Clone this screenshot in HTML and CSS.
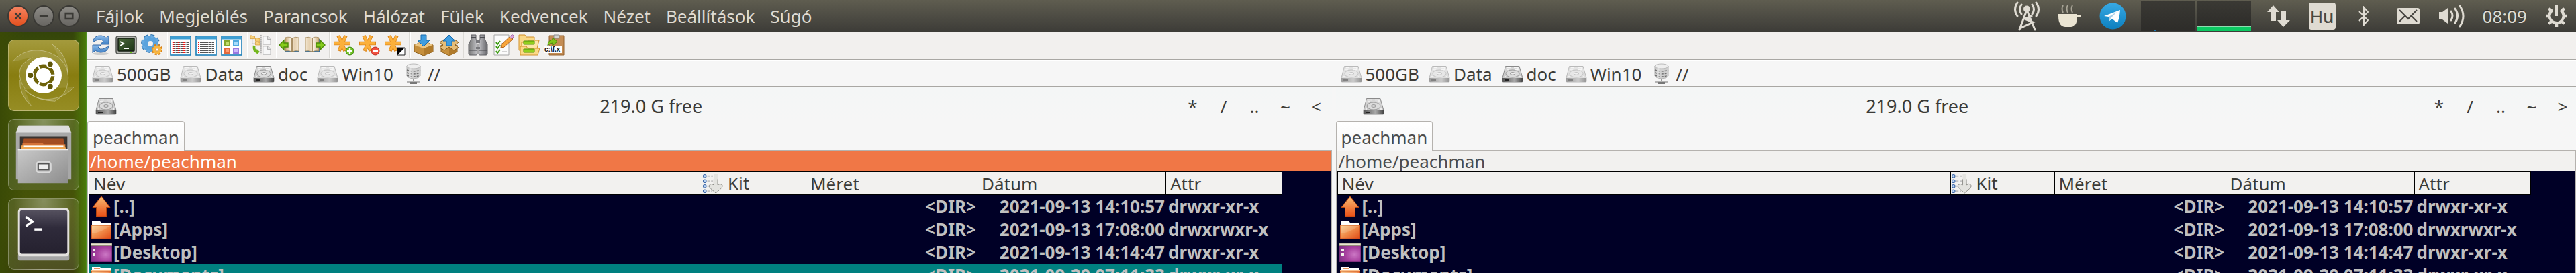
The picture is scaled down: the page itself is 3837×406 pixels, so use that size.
FILE: index.html
```html
<!DOCTYPE html>
<html lang="hu">
<head>
<meta charset="utf-8">
<title>/home/peachman</title>
<link rel="stylesheet" href="styles.css">
</head>
<body>
<svg class="defs" aria-hidden="true">
  <defs>
    <linearGradient id="gOrange" x1="0" y1="0" x2="1" y2="1"><stop offset="0" stop-color="#fbd08c"/><stop offset=".5" stop-color="#f08a48"/><stop offset="1" stop-color="#df4814"/></linearGradient>
    <linearGradient id="gUp" x1="0" y1="0" x2="0" y2="1"><stop offset="0" stop-color="#f8bd74"/><stop offset="1" stop-color="#ea4f16"/></linearGradient>
    <radialGradient id="gPurple" cx=".7" cy=".6" r=".8"><stop offset="0" stop-color="#cb77c4"/><stop offset=".5" stop-color="#a8409f"/><stop offset="1" stop-color="#7c2f84"/></radialGradient>
    <linearGradient id="gDisk" x1="0" y1="0" x2="0" y2="1"><stop offset="0" stop-color="#d8d8d8"/><stop offset="1" stop-color="#c6c6c6"/></linearGradient>
    <linearGradient id="gDiskFront" x1="0" y1="0" x2="1" y2="0"><stop offset="0" stop-color="#555"/><stop offset=".6" stop-color="#aaa"/><stop offset="1" stop-color="#444"/></linearGradient>
    <linearGradient id="gBlue" x1="0" y1="0" x2="0" y2="1"><stop offset="0" stop-color="#8cbcec"/><stop offset="1" stop-color="#3f7fc4"/></linearGradient>
    <linearGradient id="gScreen" x1="0" y1="0" x2="1" y2="1"><stop offset="0" stop-color="#4d6a3d"/><stop offset="1" stop-color="#1c3316"/></linearGradient>
    <linearGradient id="gPaper" x1="0" y1="0" x2="1" y2="0"><stop offset="0" stop-color="#c9a877"/><stop offset=".4" stop-color="#f9f1e2"/><stop offset=".7" stop-color="#e4cfae"/><stop offset="1" stop-color="#f3e7d2"/></linearGradient>
    <linearGradient id="gMetal" x1="0" y1="0" x2="1" y2="0"><stop offset="0" stop-color="#777"/><stop offset=".5" stop-color="#c8c8cc"/><stop offset="1" stop-color="#66666a"/></linearGradient>
    <linearGradient id="gTele" x1="0" y1="0" x2="0" y2="1"><stop offset="0" stop-color="#38a9e4"/><stop offset="1" stop-color="#0c7fbe"/></linearGradient>
    <linearGradient id="gCabinet" x1="0" y1="0" x2="1" y2="1"><stop offset="0" stop-color="#c9c9c9"/><stop offset="1" stop-color="#8d8d8d"/></linearGradient>
    <linearGradient id="gTerm" x1="0" y1="0" x2="0" y2="1"><stop offset="0" stop-color="#55515f"/><stop offset=".4" stop-color="#2f2b3b"/><stop offset="1" stop-color="#25212f"/></linearGradient>
  </defs>
  <symbol id="disk" viewBox="0 0 32 32">
    <path d="M5.500 4.500h20.500l5 17.500v5q0 1-1 1h-28q-1 0-1-1v-5z" fill="url(#gDisk)" stroke="#8a8a8a"/>
    <path d="M1 22h30v5q0 1-1 1h-28q-1 0-1-1z" fill="url(#gDiskFront)"/>
    <path d="M4 25h7" stroke="#222" stroke-width="2"/>
    <ellipse cx="16" cy="15.500" rx="10" ry="5.500" fill="#dcdcdc" stroke="#999"/>
    <ellipse cx="16" cy="15.500" rx="3.500" ry="1.800" fill="#eee" stroke="#888"/>
    <path d="M8 6.500h5M18 6.500h6v3h-5M7 9h4M4 20h2M26 20h2" stroke="#f6f6f6" fill="none" stroke-width="1.500"/>
  </symbol>
  <symbol id="net" viewBox="0 0 32 32">
    <path d="M6 4v14q0 4 10 5q10-1 10-5v-14z" fill="#d0d0d0" stroke="#b2b2b2"/>
    <path d="M6 10q10 4 20 0M6 14q10 4 20 0M6 18q10 4 20 0" stroke="#707070" fill="none" stroke-width="1.500" stroke-dasharray="3 2"/>
    <ellipse cx="16" cy="4.500" rx="10" ry="3.500" fill="#eee" stroke="#bbb"/>
    <path d="M11 7v15" stroke="#f2f2f2" stroke-width="3" opacity=".6"/>
    <path d="M16 23v4" stroke="#999" stroke-width="2"/>
    <path d="M6 28h20" stroke="#b4b4b4" stroke-width="3"/><path d="M11 29.500h10" stroke="#777" stroke-width="3"/>
  </symbol>
  <symbol id="up" viewBox="0 0 32 32">
    <path d="M16 1L29 17.500h-5.500v13.500h-15v-13.500H3z" fill="url(#gUp)" stroke="#b8460f"/>
  </symbol>
  <symbol id="folder" viewBox="0 0 32 32">
    <path d="M2 10V4h12l2 2h14v6z" fill="#fff"/><path d="M5 6.500h9" stroke="#e9955f"/>
    <path d="M1 9.500h30v21H1z" fill="url(#gOrange)"/><path d="M1.500 10h29v20h-29z" fill="none" stroke="#c8481a" opacity=".7"/>
    <path d="M1 9.500h30" stroke="#f9bf8c"/><path d="M2 22q13-1 27-11H2z" fill="#fff" opacity=".15"/>
  </symbol>
  <symbol id="desktop" viewBox="0 0 32 32">
    <path d="M0 4h32v26h-32z" fill="url(#gPurple)" stroke="#5f2364"/>
    <path d="M0 3h32v3.500H0z" fill="#e8e6d4" stroke="#8d8a6a" stroke-width=".8"/>
    <path d="M3 11h4v4H3zM3 18h4v4H3z" fill="#f3f1ec"/>
  </symbol>
  <symbol id="sort" viewBox="0 0 34 32">
    <path d="M8 4h9M8 12h9M8 20h9M8 28h8" stroke="#c4c4c4" stroke-width="2" stroke-dasharray="4 2"/>
    <g fill="#b9d3f2" stroke="#3f68a8" stroke-width="1.200"><circle cx="4" cy="4" r="2.400"/><circle cx="4" cy="12" r="2.400"/><circle cx="4" cy="20" r="2.400"/><circle cx="4" cy="28" r="2.400"/></g>
    <path d="M18.500 1h6v17q4-3 6.500-.5t-1.500 6.500l-8 7-8-7q-4-4-1.500-6.500t6.500.5z" fill="#e3e3df"/>
    <path d="M18.500 9v9q-4-3-6.500-.5t1.500 6.500l8 7 8-7q4-4 1.500-6.500t-6.500.5V9" fill="none" stroke="#858580"/>
  </symbol>
  <symbol id="refresh" viewBox="0 0 32 32">
    <ellipse cx="16" cy="29" rx="12" ry="2" fill="#ccc"/>
    <path d="M4 12Q6 1 17 2q5 .5 7 3.500l4-3.500v13H16l4-5q-3-3-7-2-4 .500-9 4z" fill="url(#gBlue)" stroke="#3567a5"/>
    <path d="M28 17q-1 10-12 10-5 0-8-3l-4 4V16h12l-4 4q3 3 7 2 4-1 9-5z" fill="url(#gBlue)" stroke="#3567a5"/>
  </symbol>
  <symbol id="term" viewBox="0 0 32 32">
    <rect x="1" y="3" width="30" height="26" rx="3" fill="#b4b6b0" stroke="#555753" stroke-width="1.500"/>
    <rect x="4" y="6" width="24" height="19" rx="1" fill="url(#gScreen)" stroke="#151c12" stroke-width="1.500"/>
    <path d="M7 11l5 3-5 3" fill="none" stroke="#fff" stroke-width="2"/><path d="M13 21h7" stroke="#fff" stroke-width="2"/><path d="M22 27h3" stroke="#73d216" stroke-width="2"/>
  </symbol>
  <symbol id="gears" viewBox="0 0 32 32">
    <circle cx="14" cy="14" r="11" fill="none" stroke="#2e73ae" stroke-width="6" stroke-dasharray="5 3.640"/>
    <circle cx="14" cy="14" r="8" fill="none" stroke="#5ba3dd" stroke-width="8"/>
    <circle cx="14" cy="14" r="11" fill="none" stroke="#68abe2" stroke-width="4" stroke-dasharray="4 4.640" stroke-dashoffset="-.5"/>
    <circle cx="24" cy="23" r="6.500" fill="none" stroke="#d98218" stroke-width="3.600" stroke-dasharray="3 2.100"/>
    <circle cx="24" cy="23" r="4.500" fill="#f3f1ef" stroke="#f8b63e" stroke-width="4"/>
    <circle cx="24" cy="23" r="2.200" fill="#fff" stroke="#d98218"/>
  </symbol>
  <symbol id="win" viewBox="0 0 32 32">
    <rect x="1" y="3" width="30" height="28" fill="#fff" stroke="#1c7fb8" stroke-width="1.600"/><path d="M2 5.500h28" stroke="#3d9fd4" stroke-width="4"/><path d="M2 8.500h28" stroke="#b7daee"/>
  </symbol>
  <symbol id="brief" viewBox="0 0 32 32">
    <use href="#win"/>
    <path d="M4 12h24M4 15h24M4 18h24M4 21h24M4 24h24M4 27h24" stroke="#555" stroke-width="1.800"/>
    <path d="M5 11v17M13 11v17M21 11v17" stroke="#f01414" stroke-width="2.400" stroke-dasharray="2 1"/>
    <path d="M8 11v17M16 11v17M24 11v17" stroke="#fff"/>
  </symbol>
  <symbol id="full" viewBox="0 0 32 32">
    <use href="#win"/>
    <path d="M7 12h21M7 15h21M7 18h21M7 21h21M7 24h21M7 27h21" stroke="#555" stroke-width="1.800"/>
    <path d="M20 11v17M24 11v17" stroke="#fff"/><path d="M5 11v17" stroke="#f01414" stroke-width="2" stroke-dasharray="2 1"/>
  </symbol>
  <symbol id="thumbs" viewBox="0 0 32 32">
    <use href="#win"/>
    <g stroke-width="2"><rect x="6" y="10" width="7" height="7" fill="#c2dd6c" stroke="#86a82b"/><rect x="19" y="10" width="7" height="7" fill="#a9dcfb" stroke="#51aadf"/><rect x="6" y="21" width="7" height="7" fill="#ff9b6e" stroke="#e3693c"/><rect x="19" y="21" width="7" height="7" fill="#cdb9fb" stroke="#9a79e0"/></g>
  </symbol>
  <symbol id="tree" viewBox="0 0 34 34">
    <g fill="#f8d27c" stroke="#d59b33" stroke-width=".8"><path d="M1 2h3l1 1h3v4H1zM9 6h3l1 1h3v4H9zM9 12h3l1 1h3v4H9z"/></g>
    <path d="M4 7v8h5M4 9h5" fill="none" stroke="#b9b9b9"/>
    <path d="M7 18q-1 9 5 10" fill="none" stroke="#73b61c" stroke-width="4"/><path d="M11 23v9l5-4z" fill="#73b61c"/>
    <path d="M18 1v31" stroke="#777" stroke-dasharray="2 1"/>
    <path d="M21 3h8l4 4v9H21zM21 19h8l4 4v9H21z" fill="#f7f7f7" stroke="#aaa"/><path d="M28 3v5h5M28 19v5h5" fill="#ddd" stroke="#aaa"/>
  </symbol>
  <symbol id="book" viewBox="0 0 32 32">
    <path d="M9 7h11l1.500 2L23 7h7v20H9z" fill="#2d6fa8"/><path d="M10 5q7-2 10 1v20q-4-2-10-1zM20 6q5-3 10-1v20q-5-1-10 1z" fill="url(#gPaper)" stroke="#a08352" stroke-width=".8"/>
    <path d="M20 6v20" stroke="#93764a"/>
  </symbol>
  <symbol id="prev" viewBox="0 0 32 32"><use href="#book"/><path d="M1 16l7-7v4h6v6H8v4z" fill="#86cc1b" stroke="#4d8a08" stroke-width="1.400"/></symbol>
  <symbol id="next" viewBox="0 0 32 32"><use href="#book" transform="translate(32 0) scale(-1 1)"/><path d="M31 16l-7-7v4h-6v6h6v4z" fill="#86cc1b" stroke="#4d8a08" stroke-width="1.400"/></symbol>
  <symbol id="star" viewBox="0 0 32 32">
    <g stroke="#dc861c" stroke-width="5.500"><path d="M8 2l10 23M19 2L9 25M1 13.500h25"/></g>
    <g stroke="#fbb03b" stroke-width="3.800"><path d="M8.500 3l9 21M18.500 3L9.500 24M2 13.500h23"/></g>
  </symbol>
  <symbol id="starplus" viewBox="0 0 32 32"><use href="#star"/><circle cx="25" cy="25" r="6" fill="#6fbf22" stroke="#3d8a0b"/><path d="M25 21v8M21 25h8" stroke="#fff" stroke-width="2.400"/></symbol>
  <symbol id="starminus" viewBox="0 0 32 32"><use href="#star"/><circle cx="25" cy="25" r="6" fill="#f0503f" stroke="#c02a1d"/><path d="M21 25h8" stroke="#fff" stroke-width="2.600"/></symbol>
  <symbol id="starinv" viewBox="0 0 32 32"><use href="#star"/><path d="M20 20h11v11H20z" fill="#fff" stroke="#222"/><path d="M20 20h11L20 31z"/></symbol>
  <symbol id="pack" viewBox="0 0 32 32">
    <path d="M2 16l14-6 14 6v10l-14 6-14-6z" fill="#c68f3c" stroke="#8a5d1b"/><path d="M2 16l14 5 14-5-14-6z" fill="#ecc684"/><path d="M16 21v11l14-6V16z" fill="#b07a2b"/>
    <path d="M12 1h8v8h5l-9 9-9-9h5z" fill="#3f9de0" stroke="#1a6cae"/>
  </symbol>
  <symbol id="unpack" viewBox="0 0 32 32">
    <path d="M4 16l12 4 12-4v10l-12 6-12-6z" fill="#c68f3c" stroke="#8a5d1b"/><path d="M16 20v12l12-6V16z" fill="#b07a2b"/>
    <path d="M2 12l6-4 8 4 8-4 6 4-5 4 5 4-7 4-7-5-7 5-7-4 5-4z" fill="#e6bd78" stroke="#8a5d1b"/>
    <path d="M16 1l9 9h-5v7h-8v-7H7z" fill="#3f9de0" stroke="#1a6cae"/>
  </symbol>
  <symbol id="bino" viewBox="0 0 32 32">
    <path d="M6 1h7v6l2 8v14q0 2-2 2H4q-2 0-2-2V15l4-8zM19 1h7v6l4 8v14q0 2-2 2h-9q-2 0-2-2V15l2-8z" fill="url(#gMetal)" stroke="#5e5e62"/>
    <path d="M13 9h6v4h-6zM13 19h6v3h-6z" fill="#77777b"/><path d="M3 24h11M18 24h11" stroke="#4b4b4f" stroke-dasharray="2 1"/><path d="M6 5h7M19 5h7" stroke="#4b4b4f" stroke-width="2"/>
  </symbol>
  <symbol id="todo" viewBox="0 0 32 32">
    <path d="M2 1h22v30H2z" fill="#fbfbfb" stroke="#a5a5a5"/><path d="M12 14h5M12 20h3M13 26h8" stroke="#aaa"/>
    <path d="M5 12l2 3 4-5M5 18l2 3 4-5M5 25l2 3 4-5" fill="none" stroke="#3d9b12" stroke-width="2"/>
    <path d="M12 20l1-5L26 3l4 4-13 12z" fill="#f8a53a" stroke="#b5651a"/><path d="M25 4l3-3q2-1 3 1t-1 3l-2 2z" fill="#d9a4d8" stroke="#a86fae"/>
  </symbol>
  <symbol id="sync" viewBox="0 0 32 32">
    <path d="M1 1h9l2 3h12v20H1z" fill="#fbd987" stroke="#d2902b"/><path d="M5 12h8l2-3h16l-3 12H5z" fill="#fde6a8" stroke="#d2902b"/><path d="M3 31V18h9l2 3h18l-3 10z" fill="#fbd987" stroke="#d2902b"/>
    <path d="M8 10h16v5H8zM8 22h16v5H8z" fill="#92d01d" stroke="#4d9106"/>
  </symbol>
</svg>

<header class="topbar">
  <div class="wincontrols">
    <button class="wc close" aria-label="Bezárás"><svg viewBox="0 0 32 32"><path d="M11 11l10 10M21 11L11 21"/></svg></button>
    <button class="wc" aria-label="Kis méret"><svg viewBox="0 0 32 32"><path d="M9 16h14"/></svg></button>
    <button class="wc" aria-label="Teljes méret"><svg viewBox="0 0 32 32"><path d="M10 11.500h12v9H10z"/></svg></button>
  </div>
  <nav class="menu">
    <button>Fájlok</button><button>Megjelölés</button><button>Parancsok</button><button>Hálózat</button><button>Fülek</button><button>Kedvencek</button><button>Nézet</button><button>Beállítások</button><button>Súgó</button>
  </nav>
  <div class="tray">
    <svg class="t-antenna" viewBox="0 0 40 46"><g fill="none" stroke="#dfdbd2" stroke-width="3" stroke-linecap="round"><path d="M20 14L9 43M20 14l12 29M12 40l17-8-12-5 10-4M6 3q-7 10 0 20M12 6q-5 7 0 14M34 3q7 10 0 20M28 6q5 7 0 14"/></g><circle cx="20" cy="12.500" r="5" fill="#dfdbd2"/></svg>
    <svg class="t-cup" viewBox="0 0 36 36"><path d="M1 15h28v2h6v2h-6q0 14-9 15h-9Q1 33 1 18z" fill="#eae4d2"/><path d="M8 2q-3 5 0 11M15 2q-3 5 0 11M22 2q-3 5 0 11" fill="none" stroke="#a8a496" stroke-width="2"/></svg>
    <svg class="t-tele" viewBox="0 0 40 40"><circle cx="20" cy="20" r="19.500" fill="url(#gTele)"/><path d="M7 20L31 11q-1 12-4 19l-8-6-4 3-1-6z" fill="#fff"/><path d="M14 21l12-7-9 9-2 4z" fill="#a9cfe6"/></svg>
    <div class="graphs"><span class="graph cpu"></span><span class="graph mem"></span></div>
    <svg class="t-net" viewBox="0 0 34 34"><path d="M9 1l9 10h-5v13H5V11H0zM24 33l-9-10h5V10h8v13h6z" fill="#dfdbd2"/></svg>
    <button class="kbd">Hu</button>
    <svg class="t-bt" viewBox="0 0 16 30"><path d="M1 8l13 13-6 7V2l6 7L1 22" fill="none" stroke="#dfdbd2" stroke-width="2"/></svg>
    <svg class="t-mail" viewBox="0 0 34 24"><rect width="34" height="24" rx="3" fill="#dfdbd2"/><path d="M4 3l13 13L30 3M4 20l8-8M30 20l-8-8" fill="none" stroke="#45433f" stroke-width="2"/></svg>
    <svg class="t-vol" viewBox="0 0 40 34"><path d="M1 11h5l8-6v23l-8-6H1z" fill="#dfdbd2"/><path d="M19 10q4 6.500 0 13M25 6q7 10.500 0 21M32 2q10 15 0 30" fill="none" stroke="#dfdbd2" stroke-width="3" stroke-linecap="round"/></svg>
    <time class="clock">08:09</time>
    <svg class="t-gear" viewBox="0 0 34 34"><g fill="none" stroke="#dfdbd2"><path d="M11 8a10.500 10.500 0 1 0 12 0" stroke-width="4"/><path d="M17 1v16" stroke-width="4"/><path d="M1 17h5M28 17h5M17 28v5M5.500 5.500l4 4M28.500 5.500l-4 4M5.500 28.500l4-4M28.500 28.500l-4-4" stroke-width="4.500"/></g></svg>
  </div>
</header>

<div class="shell">
  <aside class="launcher">
    <button class="tile dash" aria-label="Ubuntu"><svg viewBox="0 0 106 106"><g fill="#fff" fill-opacity=".1" stroke="#fff" stroke-opacity=".35"><path d="M6 32Q28 8 60 18q34 12 30 46-3 20-20 28Q20 90 16 50q1-16 20-24M66 6q24 16 24 46M17 60q-2 22 18 40M24 75q20 20 50 12 16-5 25-16" /></g>
      <circle cx="53" cy="53" r="27.500" fill="#fff"/><circle cx="53" cy="53" r="14" fill="none" stroke="#6d6209" stroke-width="5.500"/><g stroke="#fff" stroke-width="2.500"><path d="M53 53h20M53 53L43 36M53 53L43 70"/></g><circle cx="53" cy="53" r="11" fill="#fff"/><g fill="#5f5608" stroke="#fff" stroke-width="2"><circle cx="33" cy="53" r="5"/><circle cx="63" cy="36" r="5"/><circle cx="63" cy="70" r="5"/></g></svg></button>
    <button class="tile" aria-label="Fájlok"><svg viewBox="0 0 106 106"><path d="M15 9h76l4 11v70H11V20z" fill="#a8a8a8"/><path d="M15 9h76l4 11H11z" fill="#dedede"/><path d="M17 25h72v22H17z" fill="#3a3431"/>
      <path d="M23 28h60l3 20H20z" fill="#a34c22"/><path d="M21 35h30l2 2h33v10H20z" fill="#d5733a"/><path d="M19 39h66l3 8H18z" fill="#efa551"/><path d="M23 40h60" stroke="#fff" stroke-width="1.500"/><path d="M14 45h76v51H14z" fill="url(#gCabinet)"/><path d="M14 45h76" stroke="#eee" stroke-width="2"/><rect x="42" y="64" width="22" height="16" rx="4" fill="#b8b8b8" stroke="#dadada" stroke-width="2"/><rect x="45" y="67" width="16" height="9" fill="#eee" stroke="#555" stroke-width="1.500"/></svg></button>
    <button class="tile" aria-label="Terminál"><svg viewBox="0 0 106 106"><path d="M14 84h78v6q0 3-3 3H17q-3 0-3-3z" fill="#a5a5a5"/><rect x="14" y="14" width="78" height="73" rx="5" fill="#e3e1de"/><rect x="17" y="17" width="72" height="66" rx="3" fill="url(#gTerm)"/><path d="M26 27l10 7-10 7" fill="none" stroke="#fff" stroke-width="3.500"/><path d="M39 46h12" stroke="#fff" stroke-width="3.500"/></svg></button>
  </aside>

  <main class="app">
    <div class="toolbar">
      <button aria-label="Frissítés"><svg><use href="#refresh"/></svg></button><button aria-label="Terminál"><svg><use href="#term"/></svg></button><button aria-label="Beállítások"><svg><use href="#gears"/></svg></button><i></i>
      <button aria-label="Rövid nézet"><svg><use href="#brief"/></svg></button><button aria-label="Teljes nézet"><svg><use href="#full"/></svg></button><button aria-label="Bélyegképek"><svg><use href="#thumbs"/></svg></button><i></i>
      <button aria-label="Sík nézet"><svg><use href="#tree"/></svg></button><i></i>
      <button aria-label="Vissza"><svg><use href="#prev"/></svg></button><button aria-label="Előre"><svg><use href="#next"/></svg></button><i></i>
      <button aria-label="Kijelölés"><svg><use href="#starplus"/></svg></button><button aria-label="Kijelölés törlése"><svg><use href="#starminus"/></svg></button><button aria-label="Kijelölés megfordítása"><svg><use href="#starinv"/></svg></button><i></i>
      <button aria-label="Tömörítés"><svg><use href="#pack"/></svg></button><button aria-label="Kibontás"><svg><use href="#unpack"/></svg></button><i></i>
      <button aria-label="Keresés"><svg><use href="#bino"/></svg></button><button aria-label="Csoportos átnevezés"><svg><use href="#todo"/></svg></button><button aria-label="Szinkronizálás"><svg><use href="#sync"/></svg></button>
      <button aria-label="Útvonal másolása"><svg viewBox="0 0 32 32"><path d="M8 2h22v29H8z" fill="#c48d55" stroke="#94602c"/><path d="M15 1h8v5h-8z" fill="#d5d5d5" stroke="#8a8a8a"/><path d="M6 17q0-8 7-9V5l7 6-7 6v-4q-4 0-7 4z" fill="#7fc51c" stroke="#4a8a09"/><path d="M0 17h27v11H0z" fill="#fff"/><text x="1" y="26" class="cliptext">c:\f.x</text></svg></button>
    </div>

    <div class="drivebar">
      <div class="drives">
        <button class="dim"><svg><use href="#disk"/></svg>500GB</button><button class="dim"><svg><use href="#disk"/></svg>Data</button><button><svg><use href="#disk"/></svg>doc</button><button class="dim"><svg><use href="#disk"/></svg>Win10</button><button><svg><use href="#net"/></svg>//</button>
      </div>
      <div class="drives">
        <button class="dim"><svg><use href="#disk"/></svg>500GB</button><button class="dim"><svg><use href="#disk"/></svg>Data</button><button><svg><use href="#disk"/></svg>doc</button><button class="dim"><svg><use href="#disk"/></svg>Win10</button><button><svg><use href="#net"/></svg>//</button>
      </div>
    </div>

    <div class="panels">
      <section class="panel active">
        <div class="free"><button class="drive" aria-label="Meghajtó"><svg><use href="#disk"/></svg></button><span class="space">219.0 G free</span><button>*</button><button>/</button><button>..</button><button>~</button><button>&lt;</button></div>
        <div class="tabs"><button class="tab">peachman</button></div>
        <div class="pane">
          <div class="path">/home/peachman</div>
          <div class="list">
            <table>
              <colgroup><col class="c-name"><col class="c-ext"><col class="c-size"><col class="c-date"><col class="c-attr"></colgroup>
              <thead><tr><th>Név</th><th class="sorted"><span class="cell"><svg><use href="#sort"/></svg>Kit</span></th><th>Méret</th><th>Dátum</th><th>Attr</th></tr></thead>
              <tbody>
                <tr><td><span class="cell"><svg><use href="#up"/></svg>[..]</span></td><td></td><td class="r">&lt;DIR&gt;</td><td class="r">2021-09-13 14:10:57</td><td>drwxr-xr-x</td></tr>
                <tr><td><span class="cell"><svg><use href="#folder"/></svg>[Apps]</span></td><td></td><td class="r">&lt;DIR&gt;</td><td class="r">2021-09-13 17:08:00</td><td>drwxrwxr-x</td></tr>
                <tr><td><span class="cell"><svg><use href="#desktop"/></svg>[Desktop]</span></td><td></td><td class="r">&lt;DIR&gt;</td><td class="r">2021-09-13 14:14:47</td><td>drwxr-xr-x</td></tr>
                <tr class="cursor"><td><span class="cell"><svg><use href="#folder"/></svg>[Documents]</span></td><td></td><td class="r">&lt;DIR&gt;</td><td class="r">2021-09-20 07:11:33</td><td>drwxr-xr-x</td></tr>
              </tbody>
            </table>
          </div>
        </div>
      </section>
      <section class="panel right">
        <div class="free"><button class="drive" aria-label="Meghajtó"><svg><use href="#disk"/></svg></button><span class="space">219.0 G free</span><button>*</button><button>/</button><button>..</button><button>~</button><button>&gt;</button></div>
        <div class="tabs"><button class="tab">peachman</button></div>
        <div class="pane">
          <div class="path">/home/peachman</div>
          <div class="list">
            <table>
              <colgroup><col class="c-name"><col class="c-ext"><col class="c-size"><col class="c-date"><col class="c-attr"></colgroup>
              <thead><tr><th>Név</th><th class="sorted"><span class="cell"><svg><use href="#sort"/></svg>Kit</span></th><th>Méret</th><th>Dátum</th><th>Attr</th></tr></thead>
              <tbody>
                <tr><td><span class="cell"><svg><use href="#up"/></svg>[..]</span></td><td></td><td class="r">&lt;DIR&gt;</td><td class="r">2021-09-13 14:10:57</td><td>drwxr-xr-x</td></tr>
                <tr><td><span class="cell"><svg><use href="#folder"/></svg>[Apps]</span></td><td></td><td class="r">&lt;DIR&gt;</td><td class="r">2021-09-13 17:08:00</td><td>drwxrwxr-x</td></tr>
                <tr><td><span class="cell"><svg><use href="#desktop"/></svg>[Desktop]</span></td><td></td><td class="r">&lt;DIR&gt;</td><td class="r">2021-09-13 14:14:47</td><td>drwxr-xr-x</td></tr>
                <tr><td><span class="cell"><svg><use href="#folder"/></svg>[Documents]</span></td><td></td><td class="r">&lt;DIR&gt;</td><td class="r">2021-09-20 07:11:33</td><td>drwxr-xr-x</td></tr>
              </tbody>
            </table>
          </div>
        </div>
      </section>
    </div>
  </main>
</div>
</body>
</html>
```
FILE: styles.css
```css
* { box-sizing: border-box; }
html, body { height: 100%; }
body {
  margin: 0;
  display: flex;
  flex-direction: column;
  overflow: hidden;
  font: 26px/30px "Noto Sans", "Open Sans", sans-serif;
  color: #3c3b37;
  background: #f6f6f6;
}
button {
  margin: 0;
  padding: 0;
  border: 0;
  background: none;
  font: inherit;
  color: inherit;
  white-space: nowrap;
}
svg { display: block; flex: none; }
.defs { position: absolute; width: 0; height: 0; }
.cliptext { font: bold 10px "Liberation Sans", sans-serif; fill: #111; }

/* Top bar */
.topbar {
  flex: none;
  height: 48px;
  display: flex;
  align-items: center;
  background: linear-gradient(#5f5d50, #3c3b37);
  color: #dfdbd2;
}
.wincontrols { display: flex; gap: 6px; padding-left: 11px; }
.wc {
  width: 32px;
  height: 32px;
  border-radius: 50%;
  border: 2px solid #3a3935;
  background: linear-gradient(#8d8b86, #686662);
}
.wc.close { background: linear-gradient(#f58360, #e4511f); }
.wc svg { width: 28px; height: 28px; fill: none; stroke: #3b3a36; stroke-width: 3; }
.menu { display: flex; gap: 23px; padding-left: 24px; text-shadow: 0 -1px 1px #2a2926; }
.tray { margin-left: auto; display: flex; align-items: center; padding-right: 12px; }
.t-antenna { width: 40px; height: 46px; margin-right: 26px; }
.t-cup { width: 36px; height: 36px; margin-right: 26px; }
.t-tele { width: 40px; height: 40px; margin-right: 22px; }
.graphs { display: flex; gap: 4px; margin-right: 24px; }
.graph { width: 80px; height: 44px; background: linear-gradient(#3a3934, #2d2c29); }
.cpu { background: linear-gradient(#1a78b4, #1a78b4) 20px 42px / 2px 2px no-repeat, linear-gradient(#3a3934, #2d2c29); }
.mem { border-bottom: 6px solid #0cc862; box-shadow: inset 0 -1px #8fdcb0; }
.t-net { width: 34px; height: 34px; margin-right: 28px; }
.kbd {
  width: 40px;
  height: 40px;
  border-radius: 4px;
  background: #dfdbd2;
  color: #4a4843;
  font-weight: 500;
  margin-right: 34px;
}
.t-bt { width: 16px; height: 30px; margin-right: 41px; }
.t-mail { width: 34px; height: 24px; margin-right: 28px; }
.t-vol { width: 40px; height: 34px; margin-right: 26px; }
.clock { margin-right: 27px; text-shadow: 0 -1px 1px #2a2926; }
.t-gear { width: 34px; height: 34px; }

/* Launcher */
.shell { flex: 1; min-height: 0; display: flex; }
.launcher {
  flex: none;
  width: 130px;
  padding: 11px 10px 11px 12px;
  display: flex;
  flex-direction: column;
  gap: 12px;
  border-right: 2px solid #4f8f22;
  background: linear-gradient(90deg, #3a4a06, transparent 30%, transparent 85%, #4a7a0a), linear-gradient(#34450a, #4d5d08 25%, #3d5208 55%, #4a5308 75%, #3a3c0a);
}
.tile {
  flex: none;
  height: 106px;
  border-radius: 9px;
  border: 1px solid rgba(255, 255, 255, .3);
  background: radial-gradient(ellipse at 50% 0, rgba(255, 255, 255, .35), rgba(255, 255, 255, .1) 60%);
}
.tile svg { width: 104px; height: 104px; }
.dash { background: linear-gradient(#a49a3c, #887d10 50%, #968d24); }

/* Toolbar and drives */
.app { flex: 1; min-width: 0; display: flex; flex-direction: column; }
.toolbar {
  flex: none;
  height: 41px;
  display: flex;
  padding-left: 1px;
  background: #f2f0ee;
  border-bottom: 1px solid #a9a7a3;
}
.toolbar button { width: 38px; padding: 3px 3px 5px; }
.toolbar svg { width: 32px; height: 32px; }
.toolbar i { width: 5px; height: 38px; border-right: 1px solid #fff; background: linear-gradient(#dcdad6, #dcdad6) 2px 0 / 1px 100% no-repeat; }
.drivebar {
  flex: none;
  height: 40px;
  display: grid;
  grid-template-columns: 50% 1fr;
  border-top: 1px solid #fff;
  border-bottom: 1px solid #a9a7a3;
}
.drives { display: flex; align-items: center; gap: 14px; padding: 2px 0 0 7px; }
.drives + .drives { padding-left: 13px; }
.drives button { display: flex; align-items: center; gap: 5px; line-height: 36px; }
.drives svg { width: 32px; height: 32px; }
.dim svg { opacity: .55; }

/* Panels */
.panels { flex: 1; min-height: 0; display: grid; grid-template-columns: 50% 1fr; gap: 6px; }
.panel { min-width: 0; display: flex; flex-direction: column; border-top: 1px solid #fff; }
.right { overflow: hidden; }
.free { flex: none; height: 50px; padding-top: 6px; display: flex; align-items: center; line-height: 44px; background: linear-gradient(#f4f6f6, #f6f6f6); }
.free button { width: 46px; }
.free .drive { width: 56px; padding-left: 12px; }
.right .drive { width: 112px; padding-left: 40px; }
.right .free { margin-right: -3px; }
.free svg { width: 32px; height: 32px; }
.space { flex: 1; text-align: center; font-size: 27px; }
.tabs { flex: none; height: 43px; display: flex; }
.tab {
  height: 44px;
  padding: 2px 7px 0;
  border: 1px solid #b5b2ae;
  border-bottom: 0;
  border-radius: 4px 4px 0 0;
  background: linear-gradient(#fff, #f6f6f6);
  color: #4c4c4c;
  z-index: 1;
}
.pane { flex: 1; min-height: 0; display: flex; flex-direction: column; border: 1px solid #b5b2ae; border-bottom: 0; padding: 1px 1px 0; background: #fff; }
.path { flex: none; height: 30px; padding-left: 2px; background: #f2f1ef; color: #4c4c4c; }
.active .path { background: #f07746; color: #fff; }
.list { flex: 1; min-height: 0; overflow: hidden; background: #000026; }
table { table-layout: fixed; width: 1778px; border-collapse: separate; border-spacing: 0; }
.c-name { width: 913px; }
.c-ext { width: 155px; }
.c-size { width: 255px; }
.c-date { width: 281px; }
.c-attr { width: 174px; }
th {
  height: 35px;
  padding: 2px 6px 0;
  border: 1px solid #000;
  border-right: 0;
  background: #f2f1ef;
  font-weight: 400;
  text-align: left;
  line-height: 31px;
}
th:last-child { border-right: 1px solid #000; }
.sorted { padding: 0; }
.sorted .cell { gap: 6px; line-height: 33px; }
td { height: 34px; padding: 0 1px 0 4px; color: #c0c0c0; font-weight: 700; line-height: 34px; white-space: nowrap; }
td:first-child { padding-left: 3px; }
.r { text-align: right; }
.cell { display: flex; align-items: center; gap: 2px; }
.cell svg { width: 32px; height: 32px; }
.cursor td { background: #008080; }
```
